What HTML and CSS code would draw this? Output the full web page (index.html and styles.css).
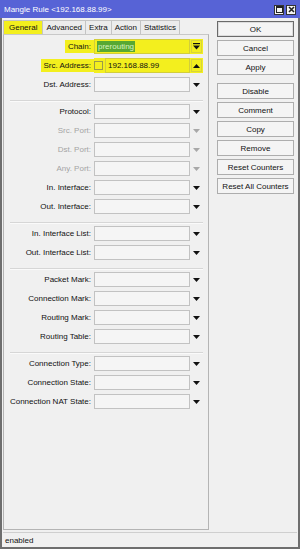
FILE: index.html
```html
<!DOCTYPE html>
<html>
<head>
<meta charset="utf-8">
<link rel="stylesheet" href="styles.css">
</head>
<body>
<div class="win">
  <div class="title">
    <span class="ttext">Mangle Rule &lt;192.168.88.99&gt;</span>
    <div class="tbtns">
      <span class="tb"><svg width="7" height="7" viewBox="0 0 7 7"><rect x="0.5" y="0.5" width="6" height="6" fill="none" stroke="#222" stroke-width="1"/><line x1="0" y1="1.5" x2="7" y2="1.5" stroke="#222" stroke-width="1"/></svg></span>
      <span class="tb"><svg width="7" height="7" viewBox="0 0 7 7"><path d="M1 1 L6 6 M6 1 L1 6" stroke="#222" stroke-width="1.6"/></svg></span>
    </div>
  </div>
  <div class="frame">
    <div class="main">
      <div class="left">
        <div class="tabs">
          <span class="tab active">General</span>
          <span class="tab">Advanced</span>
          <span class="tab">Extra</span>
          <span class="tab">Action</span>
          <span class="tab">Statistics</span>
        </div>
        <div class="page">
          <div class="row hl">
            <div class="lab"><span class="mk mk-chain">Chain:</span></div>
            <div class="field mkf">
              <div class="inp yel"><span class="sel">prerouting</span></div>
              <span class="arr"><svg width="7" height="7" viewBox="0 0 7 7"><rect x="0" y="0" width="7" height="1.2" fill="#111"/><path d="M0 2.5 H7 L3.5 6.5 Z" fill="#111"/></svg></span>
            </div>
          </div>
          <div class="row hl">
            <div class="lab"><span class="mk mk-src">Src. Address:</span></div>
            <div class="field mkf">
              <span class="chk"></span>
              <div class="inp yel short">192.168.88.99</div>
              <span class="arr"><svg width="7" height="4" viewBox="0 0 7 4"><path d="M0 4 H7 L3.5 0 Z" fill="#111"/></svg></span>
            </div>
          </div>
          <div class="row">
            <div class="lab"><span>Dst. Address:</span></div>
            <div class="field"><div class="inp"></div><span class="arr"><svg width="7" height="4" viewBox="0 0 7 4"><path d="M0 0 H7 L3.5 4 Z" fill="#111"/></svg></span></div>
          </div>
          <div class="sep"></div>
          <div class="row">
            <div class="lab"><span>Protocol:</span></div>
            <div class="field"><div class="inp"></div><span class="arr"><svg width="7" height="4" viewBox="0 0 7 4"><path d="M0 0 H7 L3.5 4 Z" fill="#111"/></svg></span></div>
          </div>
          <div class="row dis">
            <div class="lab"><span>Src. Port:</span></div>
            <div class="field"><div class="inp"></div><span class="arr"><svg width="7" height="4" viewBox="0 0 7 4"><path d="M0 0 H7 L3.5 4 Z" fill="#a8a8a8"/></svg></span></div>
          </div>
          <div class="row dis">
            <div class="lab"><span>Dst. Port:</span></div>
            <div class="field"><div class="inp"></div><span class="arr"><svg width="7" height="4" viewBox="0 0 7 4"><path d="M0 0 H7 L3.5 4 Z" fill="#a8a8a8"/></svg></span></div>
          </div>
          <div class="row dis">
            <div class="lab"><span>Any. Port:</span></div>
            <div class="field"><div class="inp"></div><span class="arr"><svg width="7" height="4" viewBox="0 0 7 4"><path d="M0 0 H7 L3.5 4 Z" fill="#a8a8a8"/></svg></span></div>
          </div>
          <div class="row">
            <div class="lab"><span>In. Interface:</span></div>
            <div class="field"><div class="inp"></div><span class="arr"><svg width="7" height="4" viewBox="0 0 7 4"><path d="M0 0 H7 L3.5 4 Z" fill="#111"/></svg></span></div>
          </div>
          <div class="row">
            <div class="lab"><span>Out. Interface:</span></div>
            <div class="field"><div class="inp"></div><span class="arr"><svg width="7" height="4" viewBox="0 0 7 4"><path d="M0 0 H7 L3.5 4 Z" fill="#111"/></svg></span></div>
          </div>
          <div class="sep"></div>
          <div class="row">
            <div class="lab"><span>In. Interface List:</span></div>
            <div class="field"><div class="inp"></div><span class="arr"><svg width="7" height="4" viewBox="0 0 7 4"><path d="M0 0 H7 L3.5 4 Z" fill="#111"/></svg></span></div>
          </div>
          <div class="row">
            <div class="lab"><span>Out. Interface List:</span></div>
            <div class="field"><div class="inp"></div><span class="arr"><svg width="7" height="4" viewBox="0 0 7 4"><path d="M0 0 H7 L3.5 4 Z" fill="#111"/></svg></span></div>
          </div>
          <div class="sep"></div>
          <div class="row">
            <div class="lab"><span>Packet Mark:</span></div>
            <div class="field"><div class="inp"></div><span class="arr"><svg width="7" height="4" viewBox="0 0 7 4"><path d="M0 0 H7 L3.5 4 Z" fill="#111"/></svg></span></div>
          </div>
          <div class="row">
            <div class="lab"><span>Connection Mark:</span></div>
            <div class="field"><div class="inp"></div><span class="arr"><svg width="7" height="4" viewBox="0 0 7 4"><path d="M0 0 H7 L3.5 4 Z" fill="#111"/></svg></span></div>
          </div>
          <div class="row">
            <div class="lab"><span>Routing Mark:</span></div>
            <div class="field"><div class="inp"></div><span class="arr"><svg width="7" height="4" viewBox="0 0 7 4"><path d="M0 0 H7 L3.5 4 Z" fill="#111"/></svg></span></div>
          </div>
          <div class="row">
            <div class="lab"><span>Routing Table:</span></div>
            <div class="field"><div class="inp"></div><span class="arr"><svg width="7" height="4" viewBox="0 0 7 4"><path d="M0 0 H7 L3.5 4 Z" fill="#111"/></svg></span></div>
          </div>
          <div class="sep"></div>
          <div class="row">
            <div class="lab"><span>Connection Type:</span></div>
            <div class="field"><div class="inp"></div><span class="arr"><svg width="7" height="4" viewBox="0 0 7 4"><path d="M0 0 H7 L3.5 4 Z" fill="#111"/></svg></span></div>
          </div>
          <div class="row">
            <div class="lab"><span>Connection State:</span></div>
            <div class="field"><div class="inp"></div><span class="arr"><svg width="7" height="4" viewBox="0 0 7 4"><path d="M0 0 H7 L3.5 4 Z" fill="#111"/></svg></span></div>
          </div>
          <div class="row">
            <div class="lab"><span>Connection NAT State:</span></div>
            <div class="field"><div class="inp"></div><span class="arr"><svg width="7" height="4" viewBox="0 0 7 4"><path d="M0 0 H7 L3.5 4 Z" fill="#111"/></svg></span></div>
          </div>
        </div>
      </div>
      <div class="right">
        <div class="btn def">OK</div>
        <div class="btn">Cancel</div>
        <div class="btn">Apply</div>
        <div class="btn gap">Disable</div>
        <div class="btn">Comment</div>
        <div class="btn">Copy</div>
        <div class="btn">Remove</div>
        <div class="btn">Reset Counters</div>
        <div class="btn">Reset All Counters</div>
      </div>
    </div>
    <div class="status">enabled</div>
  </div>
</div>
</body>
</html>
```

FILE: styles.css
```css
* { box-sizing: border-box; }
html, body {
  margin: 0;
  padding: 0;
  background: #f0f0f0;
}
body {
  font-family: "Liberation Sans", Arial, sans-serif;
  font-size: 8px;
  color: #111;
}
.win {
  width: 300px;
  height: 549px;
  display: flex;
  flex-direction: column;
  background: #f0f0f0;
}
.title {
  height: 18px;
  flex: none;
  background: #5763d6;
  color: #fff;
  display: flex;
  align-items: center;
  justify-content: space-between;
  padding: 0 4px 0 4px;
}
.ttext {
  font-size: 8px;
}
.tbtns {
  display: flex;
  gap: 2px;
  margin-top: 1px;
}
.tb {
  width: 10px;
  height: 10px;
  background: #f4f4f4;
  border: 1px solid #333;
  display: flex;
  align-items: center;
  justify-content: center;
}
.frame {
  flex: 1;
  display: flex;
  flex-direction: column;
  border: 2px solid #6e6e6e;
  border-top: 0;
  background: #f0f0f0;
}
.main {
  flex: 1;
  display: flex;
  min-height: 0;
}
.left {
  width: 206px;
  margin-left: 1px;
  display: flex;
  flex-direction: column;
}
.tabs {
  height: 16px;
  flex: none;
  display: flex;
  align-items: flex-end;
  padding-top: 2px;
}
.tab {
  height: 14px;
  padding: 0 3px;
  display: flex;
  align-items: center;
  border: 1px solid #c4c4c4;
  border-bottom: 0;
  border-left: 0;
  background: #ececec;
  color: #111;
}
.tab.active {
  background: #f3ef1e;
  border-left: 1px solid #c4c4c4;
  padding: 0 5px;
}
.page {
  flex: 1;
  border: 1px solid #b4b4b4;
  border-top-color: #c8c8c8;
  padding-top: 4px;
  display: flex;
  flex-direction: column;
}
.row {
  display: flex;
  align-items: center;
  height: 15px;
  margin-bottom: 4px;
  flex: none;
}
.lab {
  width: 90px;
  text-align: right;
  white-space: nowrap;
}
.lab span {
  display: inline-block;
  padding-right: 3px;
  line-height: 13px;
}
.dis .lab { color: #a4a4a4; }
.field {
  display: flex;
  align-items: center;
  height: 15px;
  width: 109px;
}
.inp {
  width: 96px;
  height: 15px;
  border: 1px solid #c2c2c2;
  background: #f5f5f5;
  padding-left: 2px;
  display: flex;
  align-items: center;
  font-size: 8px;
  color: #111;
}
.inp.short { width: 85px; }
.inp.yel {
  background: #f3ef1e;
  border-color: #d2ce3a;
}
.sel {
  background: #58a832;
  color: #d8f3c0;
  padding: 0 1px;
  line-height: 11px;
}
.chk {
  width: 9px;
  height: 9px;
  border: 1px solid #9a9a4a;
  margin-right: 2px;
  background: #f3ef1e;
}
.arr {
  width: 13px;
  height: 13px;
  display: flex;
  align-items: center;
  justify-content: center;
}
.mkf {
  background: #f3ef1e;
}
.mkf .arr {
  margin-left: 1px;
  width: 11px;
  height: 13px;
  border: 1px solid #d8d43a;
}
.mk {
  background: #f3ef1e;
}
.mk-chain { padding-left: 3px; }
.mk-src { padding-left: 2px; }
.sep {
  height: 8px;
  flex: none;
  display: flex;
  align-items: center;
  padding: 0 5px 0 6px;
}
.sep::before {
  content: "";
  display: block;
  width: 100%;
  height: 1px;
  background: #d6d6d6;
  box-shadow: 0 1px 0 #fafafa;
}
.right {
  width: 77px;
  margin-left: 8px;
  padding-top: 3px;
  display: flex;
  flex-direction: column;
  gap: 3px;
}
.btn {
  height: 16px;
  border: 1px solid #adadad;
  background: #f4f4f4;
  display: flex;
  align-items: center;
  justify-content: center;
  color: #111;
}
.btn.def {
  border: 1px solid #6a6a6a;
  box-shadow: inset 0 0 0 1px #dcdcdc;
}
.btn.gap { margin-top: 5px; }
.status {
  height: 15px;
  flex: none;
  margin: 2px 1px 0 1px;
  border-top: 1px solid #cfcfcf;
  background: #f0f0f0;
  display: flex;
  align-items: center;
  padding-left: 2px;
}
```
